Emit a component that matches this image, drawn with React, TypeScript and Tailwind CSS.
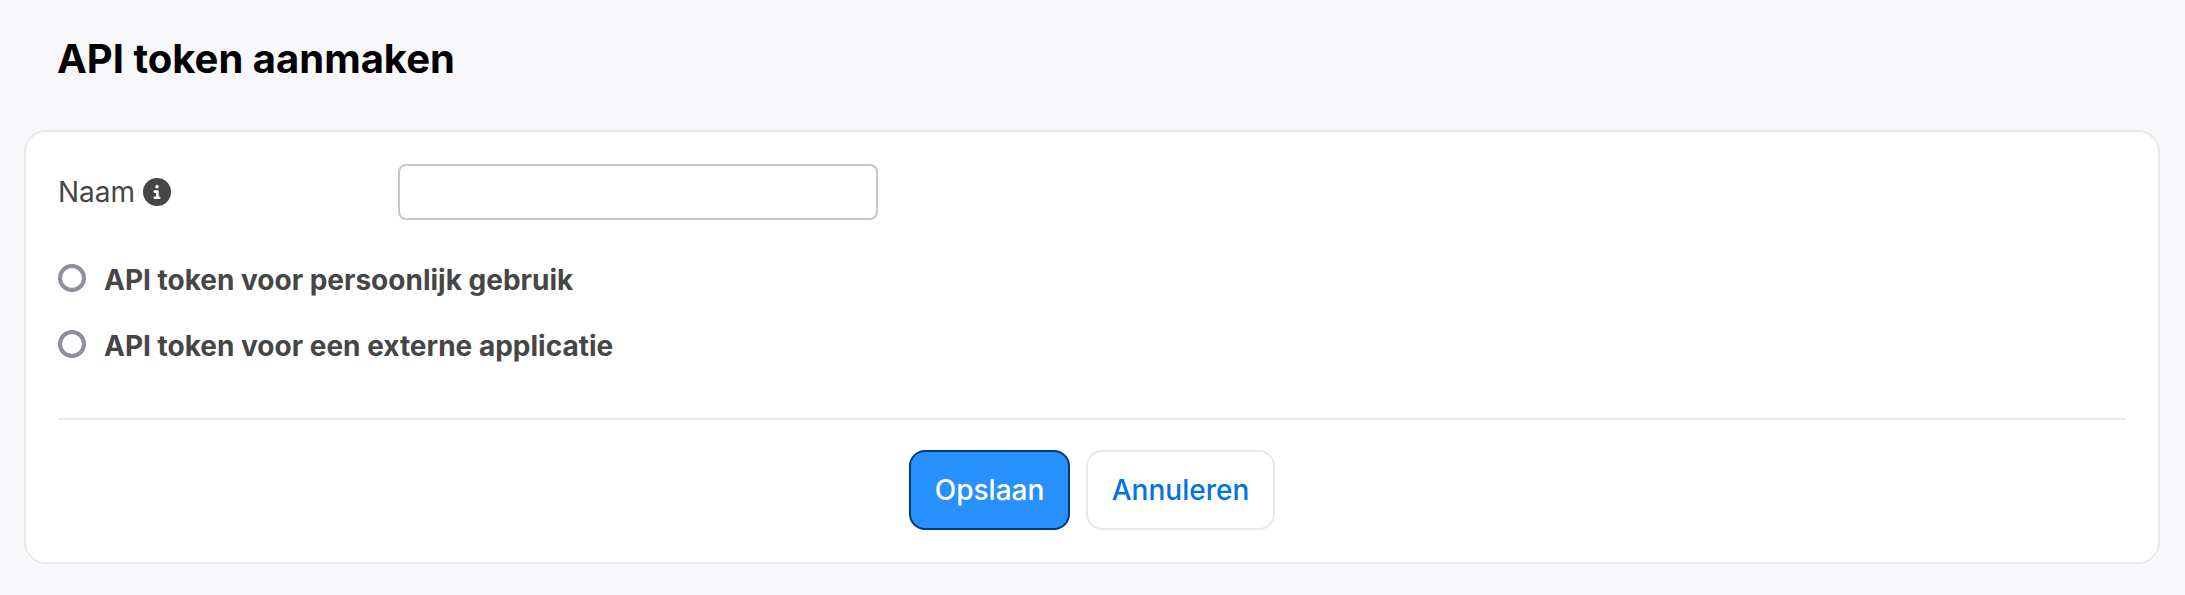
import { FaCircleInfo } from "react-icons/fa6";

export default function App() {
  return (
    <div className="h-[595px] overflow-hidden bg-[#f8f8fa] font-['Inter',sans-serif]">
      <h1 className="pl-[57px] pt-[36px] pb-[49px] text-[40px] leading-[45px] font-bold text-black">
        API token aanmaken
      </h1>
      <div className="ml-[24px] mr-[25px] h-[434px] rounded-[22px] border-2 border-[#e8e8ed] bg-white px-[32px] pt-[32px]">
        <div className="flex h-[56px] items-center">
          <label className="flex w-[340px] items-center gap-[8px] text-[28px] text-[#464646]">
            Naam
            <FaCircleInfo className="text-[28px] text-[#464646]" />
          </label>
          <input
            type="text"
            className="h-[56px] w-[480px] rounded-[8px] border-2 border-[#c5c5ca] bg-white"
          />
        </div>
        <div className="mt-[44px] flex flex-col gap-[38px]">
          <label className="flex h-[28px] items-center gap-[18px] text-[28px] font-bold text-[#464646]">
            <span className="h-[28px] w-[28px] rounded-full border-[4px] border-[#8e8e9c] bg-white" />
            <span className="pt-[3px]">API token voor persoonlijk gebruik</span>
          </label>
          <label className="flex h-[28px] items-center gap-[18px] text-[28px] font-bold text-[#464646]">
            <span className="h-[28px] w-[28px] rounded-full border-[4px] border-[#8e8e9c] bg-white" />
            <span className="pt-[3px]">API token voor een externe applicatie</span>
          </label>
        </div>
        <div className="mt-[60px] border-t-2 border-[#e8e8ed]" />
        <div className="mt-[30px] flex justify-center gap-[16px]">
          <button className="h-[80px] w-[161px] rounded-[16px] border-2 border-[#003a78] bg-[#2990ff] text-[28px] font-medium text-white">
            Opslaan
          </button>
          <button className="h-[80px] w-[189px] rounded-[16px] border-2 border-[#e8e8ed] bg-white text-[28px] font-medium text-[#0073e6]">
            Annuleren
          </button>
        </div>
      </div>
    </div>
  );
}
